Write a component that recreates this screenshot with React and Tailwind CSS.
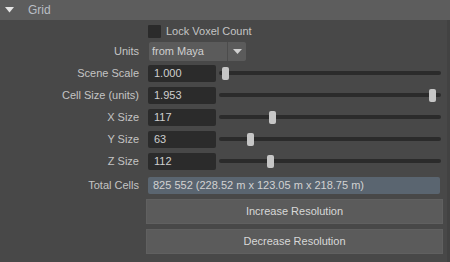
import React from 'react';

const SliderRow = ({ label, value, pos }) => (
  <div className="flex h-[17px] items-center">
    <div className="w-[140px] pr-[1px] text-right text-[#c4c4c4]">{label}</div>
    <div className="ml-[8px] flex h-[17px] w-[68px] items-center rounded-[2px] bg-[#2b2b2b] pl-[6px] text-[#cfcfcf]">
      {value}
    </div>
    <div className="relative ml-[3px] h-[17px] w-[222px]">
      <div className="absolute left-0 right-0 top-[6px] h-[4px] rounded-full bg-[#2b2b2b]" />
      <div
        className="absolute top-[2px] h-[13px] w-[7px] rounded-[2px] bg-[#c6c6c6]"
        style={{ left: pos }}
      />
    </div>
  </div>
);

const App = () => {
  const sliders = [
    { label: 'Scene Scale', value: '1.000', pos: 3 },
    { label: 'Cell Size (units)', value: '1.953', pos: 210 },
    { label: 'X Size', value: '117', pos: 50 },
    { label: 'Y Size', value: '63', pos: 28 },
    { label: 'Z Size', value: '112', pos: 48 },
  ];

  return (
    <div className="flex h-[262px] w-[450px] flex-col bg-[#484848] text-[11px] font-['Liberation_Sans',sans-serif]">
      {/* header */}
      <div className="flex h-[20px] items-center bg-[#5d5d5d]">
        <svg className="ml-[5px]" width="9" height="6" viewBox="0 0 9 6">
          <path d="M0 0 L9 0 L4.5 5.5 Z" fill="#e6e6e6" />
        </svg>
        <span className="ml-[14px] text-[12px] text-[#b9bec4]">Grid</span>
      </div>

      <div className="flex flex-1 flex-col border-r-[3px] border-[#424242]">
        {/* lock */}
        <div className="mt-[4px] flex h-[14px] items-center">
          <div className="ml-[148px] h-[13px] w-[13px] rounded-[1px] bg-[#2b2b2b]" />
          <span className="ml-[5px] text-[#c4c4c4]">Lock Voxel Count</span>
        </div>

        {/* units */}
        <div className="mt-[4px] flex h-[19px] items-center">
          <div className="w-[140px] pr-[1px] text-right text-[#c4c4c4]">Units</div>
          <div className="ml-[9px] flex h-[19px] w-[97px] items-center rounded-[2px] bg-[#5b5b5b]">
            <span className="flex-1 pl-[3px] text-[#cfcfcf]">from Maya</span>
            <div className="flex h-full w-[19px] items-center justify-center border-l border-[#4c4c4c]">
              <svg width="9" height="5" viewBox="0 0 9 5">
                <path d="M0 0 L9 0 L4.5 5 Z" fill="#d0d0d0" />
              </svg>
            </div>
          </div>
        </div>

        <div className="mt-[4px] flex flex-col gap-[5px]">
          {sliders.map((s) => (
            <SliderRow key={s.label} {...s} />
          ))}
        </div>

        {/* total */}
        <div className="mt-[7px] flex h-[17px] items-center">
          <div className="w-[140px] pr-[1px] text-right text-[#c4c4c4]">Total Cells</div>
          <div className="ml-[8px] flex h-[17px] w-[292px] items-center rounded-[2px] bg-[#5a6570] pl-[5px] text-[#d2d2d2]">
            825 552 (228.52 m x 123.05 m x 218.75 m)
          </div>
        </div>

        {/* buttons */}
        <div className="ml-[146px] mt-[5px] flex w-[297px] flex-col gap-[5px]">
          <button className="flex h-[25px] items-center justify-center border border-[#606060] bg-[#5b5b5b] text-[#d8d8d8]">
            Increase Resolution
          </button>
          <button className="flex h-[25px] items-center justify-center border border-[#606060] bg-[#5b5b5b] text-[#d8d8d8]">
            Decrease Resolution
          </button>
        </div>
      </div>
    </div>
  );
};

export default App;
